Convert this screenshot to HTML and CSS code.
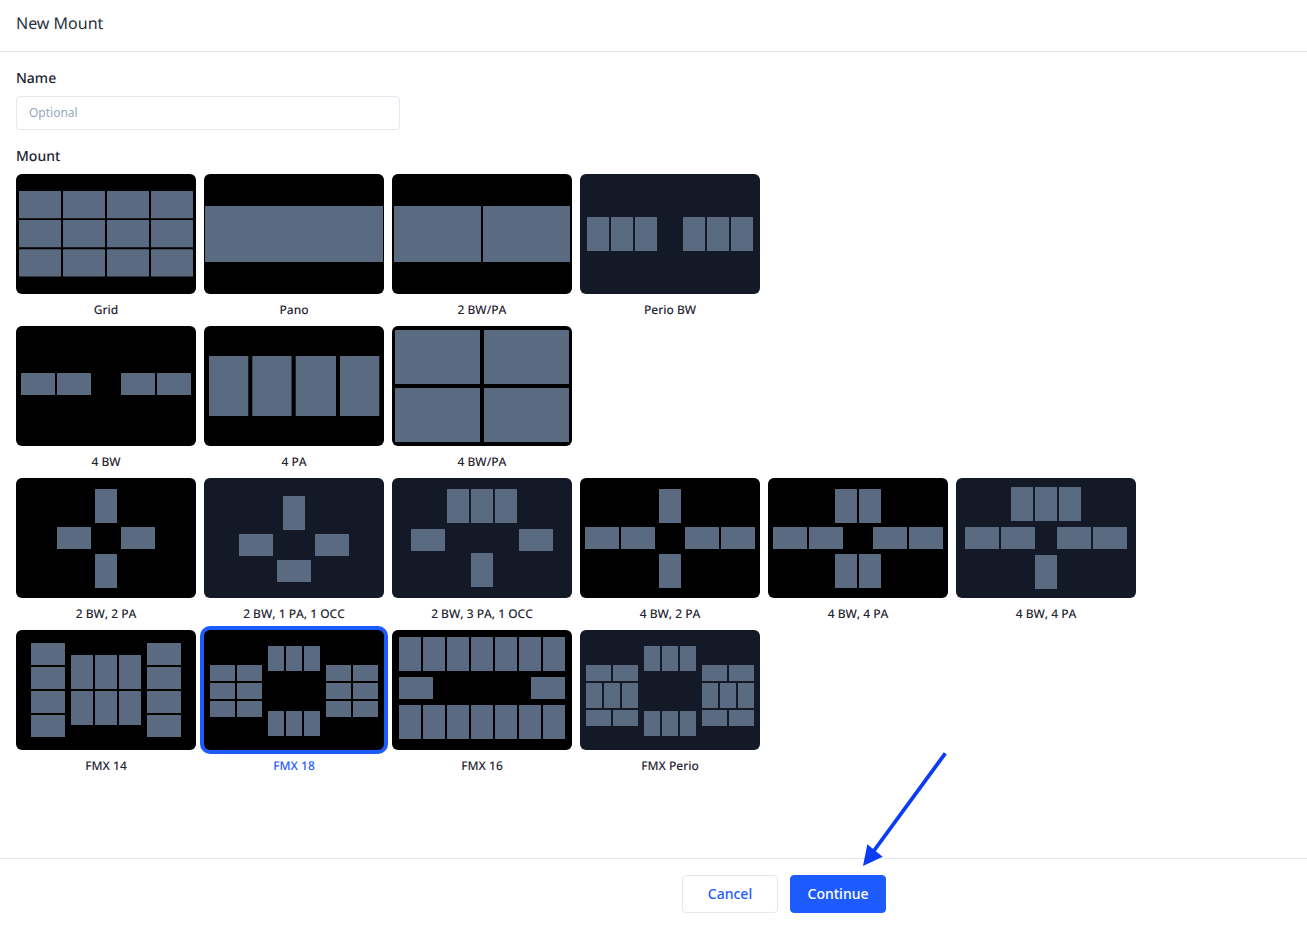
FILE: index.html
```html
<!DOCTYPE html>
<html lang="en">
<head>
<meta charset="utf-8">
<title>New Mount</title>
<link rel="stylesheet" href="styles.css">
</head>
<body>
<div class="page">
  <header class="header"><h1 class="title">New Mount</h1></header>
  <main class="content">
    <label class="field-label" for="mount-name">Name</label>
    <input class="text-input" id="mount-name" type="text" placeholder="Optional">
    <div class="field-label mount-label">Mount</div>
    <div class="rows">
      <div class="row">
        <div class="item"><svg class="thumb" viewBox="0 0 180 120"><rect x="3" y="17" width="42" height="27.3"/><rect x="47" y="17" width="42" height="27.3"/><rect x="91" y="17" width="42" height="27.3"/><rect x="135" y="17" width="42" height="27.3"/><rect x="3" y="46" width="42" height="27.3"/><rect x="47" y="46" width="42" height="27.3"/><rect x="91" y="46" width="42" height="27.3"/><rect x="135" y="46" width="42" height="27.3"/><rect x="3" y="75.3" width="42" height="27.3"/><rect x="47" y="75.3" width="42" height="27.3"/><rect x="91" y="75.3" width="42" height="27.3"/><rect x="135" y="75.3" width="42" height="27.3"/></svg><div class="label">Grid</div></div>
        <div class="item"><svg class="thumb" viewBox="0 0 180 120"><rect x="1" y="32" width="178" height="56"/></svg><div class="label">Pano</div></div>
        <div class="item"><svg class="thumb" viewBox="0 0 180 120"><rect x="2" y="32" width="87" height="56"/><rect x="91" y="32" width="87" height="56"/></svg><div class="label">2 BW/PA</div></div>
        <div class="item"><svg class="thumb navy" viewBox="0 0 180 120"><rect x="7" y="43" width="22" height="34"/><rect x="31" y="43" width="22" height="34"/><rect x="55" y="43" width="22" height="34"/><rect x="103" y="43" width="22" height="34"/><rect x="127" y="43" width="22" height="34"/><rect x="151" y="43" width="22" height="34"/></svg><div class="label">Perio BW</div></div>
      </div>
      <div class="row">
        <div class="item"><svg class="thumb" viewBox="0 0 180 120"><rect x="5" y="47" width="34" height="22"/><rect x="41" y="47" width="34" height="22"/><rect x="105" y="47" width="34" height="22"/><rect x="141" y="47" width="34" height="22"/></svg><div class="label">4 BW</div></div>
        <div class="item"><svg class="thumb" viewBox="0 0 180 120"><rect x="5" y="30" width="39.3" height="60"/><rect x="48.3" y="30" width="39.3" height="60"/><rect x="91.7" y="30" width="40.3" height="60"/><rect x="136" y="30" width="39.3" height="60"/></svg><div class="label">4 PA</div></div>
        <div class="item"><svg class="thumb" viewBox="0 0 180 120"><rect x="3" y="4" width="85" height="54"/><rect x="92" y="4" width="85" height="54"/><rect x="3" y="62" width="85" height="54"/><rect x="92" y="62" width="85" height="54"/></svg><div class="label">4 BW/PA</div></div>
      </div>
      <div class="row">
        <div class="item"><svg class="thumb" viewBox="0 0 180 120"><rect x="79" y="11" width="22" height="34"/><rect x="41" y="49" width="34" height="22"/><rect x="105" y="49" width="34" height="22"/><rect x="79" y="76" width="22" height="34"/></svg><div class="label">2 BW, 2 PA</div></div>
        <div class="item"><svg class="thumb navy" viewBox="0 0 180 120"><rect x="79" y="18" width="22" height="34"/><rect x="35" y="56" width="34" height="22"/><rect x="111" y="56" width="34" height="22"/><rect x="73" y="82" width="34" height="22"/></svg><div class="label">2 BW, 1 PA, 1 OCC</div></div>
        <div class="item"><svg class="thumb navy" viewBox="0 0 180 120"><rect x="55" y="11" width="22" height="34"/><rect x="79" y="11" width="22" height="34"/><rect x="103" y="11" width="22" height="34"/><rect x="19" y="51" width="34" height="22"/><rect x="127" y="51" width="34" height="22"/><rect x="79" y="75" width="22" height="34"/></svg><div class="label">2 BW, 3 PA, 1 OCC</div></div>
        <div class="item"><svg class="thumb" viewBox="0 0 180 120"><rect x="79" y="11" width="22" height="34"/><rect x="5" y="49" width="34" height="22"/><rect x="41" y="49" width="34" height="22"/><rect x="105" y="49" width="34" height="22"/><rect x="141" y="49" width="34" height="22"/><rect x="79" y="76" width="22" height="34"/></svg><div class="label">4 BW, 2 PA</div></div>
        <div class="item"><svg class="thumb" viewBox="0 0 180 120"><rect x="67" y="11" width="22" height="34"/><rect x="91" y="11" width="22" height="34"/><rect x="5" y="49" width="34" height="22"/><rect x="41" y="49" width="34" height="22"/><rect x="105" y="49" width="34" height="22"/><rect x="141" y="49" width="34" height="22"/><rect x="67" y="76" width="22" height="34"/><rect x="91" y="76" width="22" height="34"/></svg><div class="label">4 BW, 4 PA</div></div>
        <div class="item"><svg class="thumb navy" viewBox="0 0 180 120"><rect x="55" y="9" width="22" height="34"/><rect x="79" y="9" width="22" height="34"/><rect x="103" y="9" width="22" height="34"/><rect x="9" y="49" width="34" height="22"/><rect x="45" y="49" width="34" height="22"/><rect x="101" y="49" width="34" height="22"/><rect x="137" y="49" width="34" height="22"/><rect x="79" y="77" width="22" height="34"/></svg><div class="label">4 BW, 4 PA</div></div>
      </div>
      <div class="row">
        <div class="item"><svg class="thumb" viewBox="0 0 180 120"><rect x="15" y="13" width="34" height="22"/><rect x="15" y="37" width="34" height="22"/><rect x="15" y="61" width="34" height="22"/><rect x="15" y="85" width="34" height="22"/><rect x="55" y="25" width="22" height="34"/><rect x="79" y="25" width="22" height="34"/><rect x="103" y="25" width="22" height="34"/><rect x="55" y="61" width="22" height="34"/><rect x="79" y="61" width="22" height="34"/><rect x="103" y="61" width="22" height="34"/><rect x="131" y="13" width="34" height="22"/><rect x="131" y="37" width="34" height="22"/><rect x="131" y="61" width="34" height="22"/><rect x="131" y="85" width="34" height="22"/></svg><div class="label">FMX 14</div></div>
        <div class="item selected"><svg class="thumb" viewBox="0 0 180 120"><rect x="6" y="35" width="25" height="16"/><rect x="33" y="35" width="25" height="16"/><rect x="6" y="53" width="25" height="16"/><rect x="33" y="53" width="25" height="16"/><rect x="6" y="71" width="25" height="16"/><rect x="33" y="71" width="25" height="16"/><rect x="64" y="16" width="16" height="25"/><rect x="82" y="16" width="16" height="25"/><rect x="100" y="16" width="16" height="25"/><rect x="64" y="81" width="16" height="25"/><rect x="82" y="81" width="16" height="25"/><rect x="100" y="81" width="16" height="25"/><rect x="122" y="35" width="25" height="16"/><rect x="149" y="35" width="25" height="16"/><rect x="122" y="53" width="25" height="16"/><rect x="149" y="53" width="25" height="16"/><rect x="122" y="71" width="25" height="16"/><rect x="149" y="71" width="25" height="16"/></svg><div class="label">FMX 18</div></div>
        <div class="item"><svg class="thumb" viewBox="0 0 180 120"><rect x="7" y="7" width="22" height="34"/><rect x="31" y="7" width="22" height="34"/><rect x="55" y="7" width="22" height="34"/><rect x="79" y="7" width="22" height="34"/><rect x="103" y="7" width="22" height="34"/><rect x="127" y="7" width="22" height="34"/><rect x="151" y="7" width="22" height="34"/><rect x="7" y="47" width="34" height="22"/><rect x="139" y="47" width="34" height="22"/><rect x="7" y="75" width="22" height="34"/><rect x="31" y="75" width="22" height="34"/><rect x="55" y="75" width="22" height="34"/><rect x="79" y="75" width="22" height="34"/><rect x="103" y="75" width="22" height="34"/><rect x="127" y="75" width="22" height="34"/><rect x="151" y="75" width="22" height="34"/></svg><div class="label">FMX 16</div></div>
        <div class="item"><svg class="thumb navy" viewBox="0 0 180 120"><rect x="6" y="35" width="25" height="16"/><rect x="33" y="35" width="25" height="16"/><rect x="6" y="53" width="16" height="25"/><rect x="24" y="53" width="16" height="25"/><rect x="42" y="53" width="16" height="25"/><rect x="6" y="80" width="25" height="16"/><rect x="33" y="80" width="25" height="16"/><rect x="64" y="16" width="16" height="25"/><rect x="82" y="16" width="16" height="25"/><rect x="100" y="16" width="16" height="25"/><rect x="64" y="81" width="16" height="25"/><rect x="82" y="81" width="16" height="25"/><rect x="100" y="81" width="16" height="25"/><rect x="122" y="35" width="25" height="16"/><rect x="149" y="35" width="25" height="16"/><rect x="122" y="53" width="16" height="25"/><rect x="140" y="53" width="16" height="25"/><rect x="158" y="53" width="16" height="25"/><rect x="122" y="80" width="25" height="16"/><rect x="149" y="80" width="25" height="16"/></svg><div class="label">FMX Perio</div></div>
      </div>
    </div>
  </main>
  <footer class="footer">
    <button class="btn btn-secondary" type="button">Cancel</button>
    <button class="btn btn-primary" type="button">Continue</button>
  </footer>
  <svg class="annotation" width="1307" height="925" viewBox="0 0 1307 925" aria-hidden="true">
    <line x1="945.3" y1="753.3" x2="873" y2="852"/>
    <polygon points="863,866 867.3,844.3 882.7,856.7"/>
  </svg>
</div>
</body>
</html>
```
FILE: styles.css
```css
* { box-sizing: border-box; }
html, body { margin: 0; padding: 0; background: #fff; }
body { font-family: "Noto Sans", "Open Sans", sans-serif; color: #1f2533; text-rendering: geometricPrecision; }
.page { position: relative; width: 1307px; height: 925px; overflow: hidden; display: flex; flex-direction: column; }
.header { height: 52px; padding: 0 16px; border-bottom: 1px solid #e2e8f0; display: flex; align-items: center; padding-bottom: 5px; }
.title { margin: 0; font-size: 16px; font-weight: 400; line-height: 24px; color: #2a3140; }
.content { flex: 1; padding: 16px 16px 0; display: flex; flex-direction: column; align-items: flex-start; }
.field-label { display: block; height: 20px; padding-top: 1px; font-size: 14px; font-weight: 500; line-height: 20px; color: #1f2533; }
.text-input { display: block; width: 384px; height: 34px; margin-top: 8px; padding: 0 12px 2px; border: 1px solid #e2e8f0; border-radius: 4px; font: 12px/16px "Noto Sans", sans-serif; color: #1f2533; background: #fff; outline: none; }
.text-input::placeholder { color: #9aa8bb; opacity: 1; }
.mount-label { margin-top: 16px; }
.rows { margin-top: 8px; display: flex; flex-direction: column; gap: 8px; }
.row { display: flex; gap: 8px; }
.item { width: 180px; height: 144px; }
.thumb { display: block; width: 180px; height: 120px; background: #000; border-radius: 6px; fill: #5a6a80; }
.thumb rect { rx: 0.6px; }
.navy { background: #131926; }
.label { margin-top: 8px; font-size: 12px; line-height: 16px; font-weight: 500; text-align: center; color: #1f2533; font-kerning: none; }
.selected .thumb { box-shadow: 0 0 0 4px #1e5bff; }
.selected .label { color: #1e5bff; }
.footer { height: 67px; padding: 16px 421px 0 0; border-top: 1px solid #e2e8f0; display: flex; justify-content: flex-end; align-items: flex-start; gap: 12px; }
.btn { width: 96px; height: 38px; border-radius: 4px; font: 500 14px/20px "Noto Sans", sans-serif; cursor: pointer; }
.btn-secondary { background: #fff; color: #1e5bff; border: 1px solid #e2e8f0; }
.btn-primary { background: #1e5bff; color: #fff; border: 1px solid #1e5bff; }
.annotation { position: absolute; left: 0; top: 0; pointer-events: none; fill: #0a3cf5; stroke: #0a3cf5; }
.annotation line { stroke-width: 3.8; }
.annotation polygon { stroke: none; }
```
